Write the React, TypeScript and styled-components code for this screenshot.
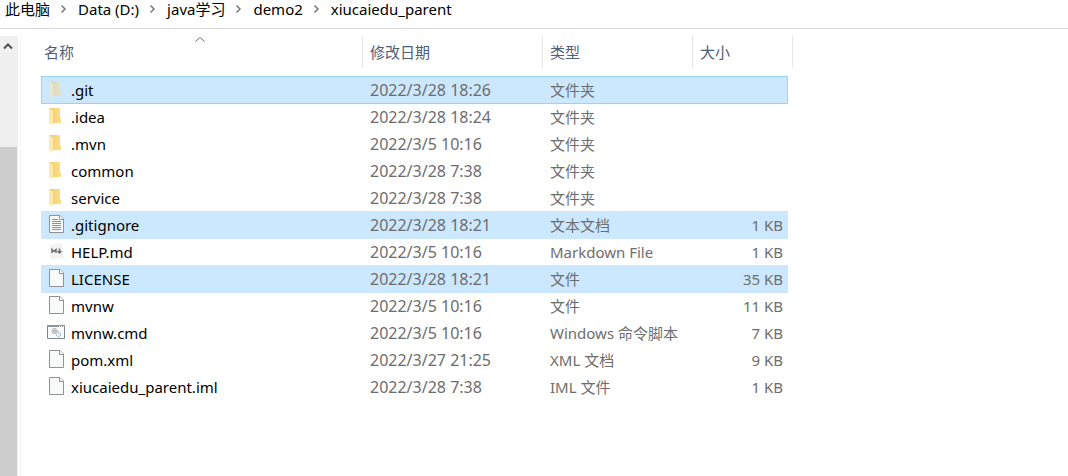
import React from "react";
import styled, { createGlobalStyle, css } from "styled-components";

const GlobalStyle = createGlobalStyle`
  *, *::before, *::after { box-sizing: border-box; }
  body {
    margin: 0;
    background: #ffffff;
    color: #000000;
    font-family: "Noto Sans", "Noto Sans CJK SC", sans-serif;
    font-size: 15px;
    line-height: 20px;
  }
`;

const Window = styled.div`
  display: flex;
  flex-direction: column;
  min-height: 100vh;
`;

const AddressBar = styled.nav`
  border-bottom: 1px solid #d9d9d9;
  padding: 0 5px 10px;
  line-height: 18px;
`;

const Crumbs = styled.ol`
  display: flex;
  list-style: none;
  margin: 0;
  padding: 0;
`;

const Crumb = styled.li`
  display: flex;
  align-items: center;
  height: 18px;
  white-space: nowrap;
`;

const CrumbLink = styled.a`
  color: inherit;
  text-decoration: none;
`;

const CrumbArrow = styled.svg`
  width: 6px;
  height: 8px;
  margin: 0 11px;
`;

const Body = styled.div`
  display: flex;
  flex: 1;
  padding-top: 7px;
`;

const ScrollBar = styled.div`
  display: flex;
  flex-direction: column;
  width: 18px;
  flex: none;
  background: #f0f0f0;
`;

const ScrollButton = styled.button`
  display: flex;
  justify-content: center;
  width: 16px;
  height: 18px;
  margin-bottom: 93px;
  padding: 7px 0 0;
  border: 0;
  background: transparent;
`;

const ScrollThumb = styled.div`
  flex: 1;
  width: 17px;
  background: #cdcdcd;
`;

const Listing = styled.main`
  flex: 1;
  margin-left: 2px;
  padding-left: 20px;
  border-left: 1px solid #f3f3f3;
`;

const FileTable = styled.table`
  width: 747px;
  table-layout: fixed;
  border-collapse: separate;
  border-spacing: 0;
`;

const HeadCell = styled.th<{ $width: number; $pad: number }>`
  position: relative;
  width: ${(p) => p.$width}px;
  height: 32px;
  padding: 0 0 0 ${(p) => p.$pad}px;
  color: #4c607a;
  font-weight: 400;
  text-align: left;

  &::after {
    content: "";
    position: absolute;
    top: 0;
    bottom: 0;
    right: 0;
    border-right: 1px solid #e5e5e5;
  }

  &:last-child::after {
    right: -5px;
  }
`;

const SortArrow = styled.svg`
  position: absolute;
  top: 1px;
  left: 50%;
  width: 10px;
  height: 5px;
  margin-left: -7px;
`;

const Rows = styled.tbody`
  &::before {
    content: "";
    display: block;
    height: 8px;
  }
`;

const Row = styled.tr<{ $selected?: boolean; $focused?: boolean }>`
  height: 27px;
  ${(p) =>
    p.$selected &&
    css`
      background: #cce8ff;
      box-shadow: 0 1px 0 #cce8ff;
    `}
  ${(p) =>
    p.$focused &&
    css`
      box-shadow: 0 1px 0 #99d1ff, inset 0 1px 0 #99d1ff,
        inset 1px 0 0 #99d1ff, inset -1px 0 0 #99d1ff;
    `}
`;

const Cell = styled.td<{ $right?: boolean }>`
  padding: 0 5px 0 7px;
  color: #6d6d6d;
  white-space: nowrap;
  text-align: ${(p) => (p.$right ? "right" : "left")};
`;

const DateCell = styled(Cell)`
  font-size: 16px;
`;

const NameCell = styled(Cell)`
  padding-left: 5px;
  color: #000000;
`;

const FileName = styled.span`
  display: flex;
  align-items: center;
  gap: 5px;
`;

const IconFrame = styled.svg`
  flex: none;
  width: 20px;
  height: 19px;
`;

type Kind = "folder" | "hidden" | "text" | "markdown" | "page" | "script";

function Page({ lines }: { lines?: boolean }) {
  return (
    <>
      <path d="M3.5 .5H14L17.5 4V17.5H3.5Z" fill="#f9fafa" stroke="#929292" />
      <path d="M13.5 .5V4.5H17.5" fill="#fff" stroke="#929292" />
      {lines && (
        <path d="M6 4.5H12M6 6.5H15M6 8.5H15M6 10.5H15M6 12.5H15M6 14.5H15" stroke="#8f8f8f" />
      )}
    </>
  );
}

function FileIcon({ kind }: { kind: Kind }) {
  return (
    <IconFrame viewBox="0 0 20 19" aria-hidden="true" fill="none">
      {(kind === "folder" || kind === "hidden") && (
        <g opacity={kind === "hidden" ? 0.5 : 1}>
          <defs>
            <linearGradient id="folder-back">
              <stop offset="0" stopColor="#f2cd6c" />
              <stop offset="1" stopColor="#fcdf8b" />
            </linearGradient>
          </defs>
          <path d="M3 1H14V11L15 12V16H6L3 14Z" fill="url(#folder-back)" />
          <path d="M3 1L7 4V18L3 16Z" fill="#ffe9a6" />
        </g>
      )}
      {kind === "text" && <Page lines />}
      {kind === "page" && <Page />}
      {kind === "markdown" && (
        <>
          <path d="M3 3L16 1L18 16L5 18Z" fill="#f3f3f3" />
          <path d="M6 11V7.500L8 9.500L10 7.500V11M13.500 6.500V10.500M11.500 9L13.500 11L15.500 9" stroke="#6a6a6a" strokeWidth="1.400" />
        </>
      )}
      {kind === "script" && (
        <>
          <path d="M1.5 2.5H18.5V15.5H1.5Z" fill="#fafafa" stroke="#7f858a" />
          <path d="M1 3H19" stroke="#8e9498" strokeWidth="2" />
          <path d="M13 3.5H14M15 3.5H16M17 3.5H18" stroke="#fff" />
          <circle cx="8.500" cy="8" r="2.500" stroke="#9a9fa4" strokeWidth="1.300" strokeDasharray="1.200 .8" />
          <circle cx="8.500" cy="8" r="1" stroke="#9a9fa4" />
          <circle cx="12.500" cy="11.500" r="2" stroke="#8fb5d2" strokeWidth="1.300" strokeDasharray="1.200 .8" />
        </>
      )}
    </IconFrame>
  );
}

interface Entry {
  name: string;
  date: string;
  type: string;
  size?: string;
  kind: Kind;
  selected?: boolean;
  focused?: boolean;
}

const entries: Entry[] = [
  { name: ".git", date: "2022/3/28 18:26", type: "文件夹", kind: "hidden", selected: true, focused: true },
  { name: ".idea", date: "2022/3/28 18:24", type: "文件夹", kind: "folder" },
  { name: ".mvn", date: "2022/3/5 10:16", type: "文件夹", kind: "folder" },
  { name: "common", date: "2022/3/28 7:38", type: "文件夹", kind: "folder" },
  { name: "service", date: "2022/3/28 7:38", type: "文件夹", kind: "folder" },
  { name: ".gitignore", date: "2022/3/28 18:21", type: "文本文档", size: "1 KB", kind: "text", selected: true },
  { name: "HELP.md", date: "2022/3/5 10:16", type: "Markdown File", size: "1 KB", kind: "markdown" },
  { name: "LICENSE", date: "2022/3/28 18:21", type: "文件", size: "35 KB", kind: "page", selected: true },
  { name: "mvnw", date: "2022/3/5 10:16", type: "文件", size: "11 KB", kind: "page" },
  { name: "mvnw.cmd", date: "2022/3/5 10:16", type: "Windows 命令脚本", size: "7 KB", kind: "script" },
  { name: "pom.xml", date: "2022/3/27 21:25", type: "XML 文档", size: "9 KB", kind: "page" },
  { name: "xiucaiedu_parent.iml", date: "2022/3/28 7:38", type: "IML 文件", size: "1 KB", kind: "page" },
];

const path = ["此电脑", "Data (D:)", "java学习", "demo2", "xiucaiedu_parent"];

export default function App() {
  return (
    <Window lang="zh-CN">
      <GlobalStyle />
      <AddressBar aria-label="路径">
        <Crumbs>
          {path.map((part, i) => (
            <Crumb key={part}>
              {i > 0 && (
                <CrumbArrow viewBox="0 0 6 8" aria-hidden="true">
                  <path d="M.5 .5L4 4L.5 7.500" fill="none" stroke="#777" strokeWidth="1.500" />
                </CrumbArrow>
              )}
              <CrumbLink href="#">{part}</CrumbLink>
            </Crumb>
          ))}
        </Crumbs>
      </AddressBar>
      <Body>
        <ScrollBar>
          <ScrollButton type="button" aria-label="向上滚动">
            <svg width="10" height="7" viewBox="0 0 10 7" aria-hidden="true">
              <path d="M1 5.500L5 1.500L9 5.500" fill="none" stroke="#505050" strokeWidth="2" />
            </svg>
          </ScrollButton>
          <ScrollThumb />
        </ScrollBar>
        <Listing>
          <FileTable>
            <thead>
              <tr>
                <HeadCell scope="col" $width={322} $pad={3} aria-sort="ascending">
                  <SortArrow viewBox="0 0 10 5" aria-hidden="true">
                    <path d="M.5 4.500L5 .5L9.500 4.500" fill="none" stroke="#6d6d6d" />
                  </SortArrow>
                  名称
                </HeadCell>
                <HeadCell scope="col" $width={180} $pad={7}>修改日期</HeadCell>
                <HeadCell scope="col" $width={150} $pad={7}>类型</HeadCell>
                <HeadCell scope="col" $width={95} $pad={7}>大小</HeadCell>
              </tr>
            </thead>
            <Rows>
              {entries.map((e) => (
                <Row key={e.name} $selected={e.selected} $focused={e.focused}>
                  <NameCell>
                    <FileName>
                      <FileIcon kind={e.kind} />
                      {e.name}
                    </FileName>
                  </NameCell>
                  <DateCell>{e.date}</DateCell>
                  <Cell>{e.type}</Cell>
                  <Cell $right>{e.size}</Cell>
                </Row>
              ))}
            </Rows>
          </FileTable>
        </Listing>
      </Body>
    </Window>
  );
}
